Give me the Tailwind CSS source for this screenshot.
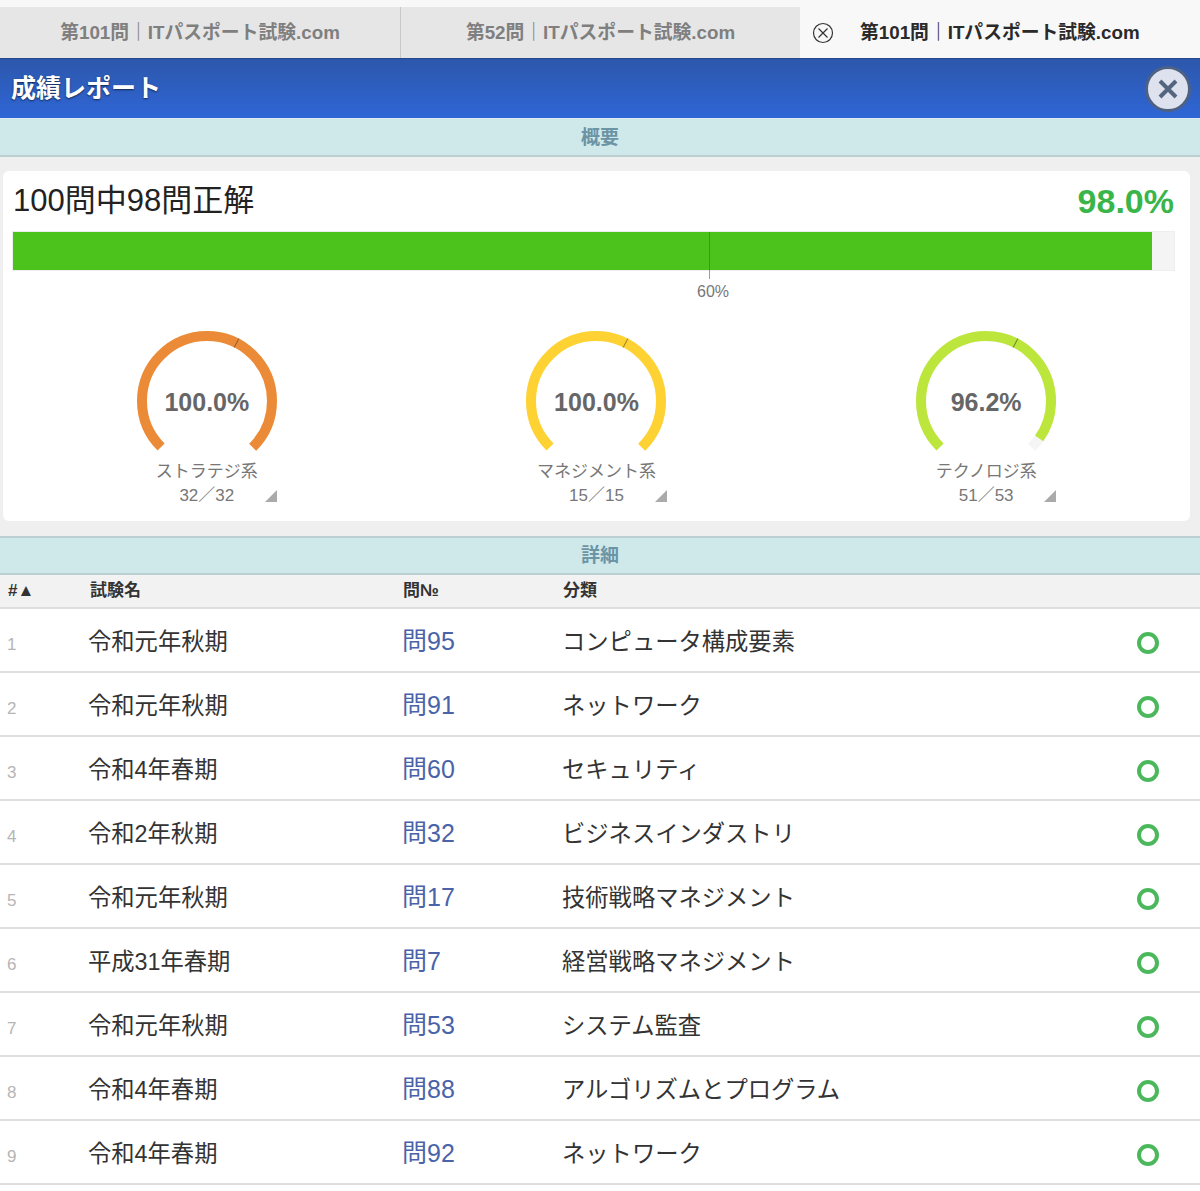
<!DOCTYPE html>
<html lang="ja">
<head>
	<meta charset="UTF-8">
	<title>成績レポート</title>
	<script src="https://cdn.jsdelivr.net/npm/@tailwindcss/browser@4"></script>
</head>
<body class="bg-white font-['Liberation_Sans','Noto_Sans_CJK_JP',sans-serif]">
<div class="w-[1200px] h-[1191px] overflow-hidden flex flex-col">
	<!-- Tabs -->
	<div class="bg-[#f8f8f8] pt-[7px] h-[58px] flex shrink-0">
		<div class="w-[400px] flex items-center justify-center pt-[2px] bg-[#e6e6e7] text-[18.8px] font-bold text-[#7f7f7f]">第101問｜ITパスポート試験.com</div>
		<div class="w-[400px] flex items-center justify-center pt-[2px] bg-[#e6e6e7] border-l border-[#c8c8c8] text-[18.8px] font-bold text-[#7f7f7f]">第52問｜ITパスポート試験.com</div>
		<div class="w-[400px] flex items-center pl-[12px] gap-[26px] text-[18.8px] font-bold text-[#2a2a2a]">
			<svg width="22" height="22" viewBox="0 0 22 22" fill="none" stroke="#333" stroke-width="1.2">
				<circle cx="11" cy="11" r="9.5"></circle>
				<path d="M6.5 6.5l9 9M15.5 6.5l-9 9"></path>
			</svg>
			<span class="pt-[2px]">第101問｜ITパスポート試験.com</span>
		</div>
	</div>

	<!-- Title bar -->
	<div class="h-[60px] shrink-0 flex items-center justify-between pl-[11px] pr-[9px] border-t border-[#24498f] bg-gradient-to-b from-[#2c57ac] to-[#2f66d6]">
		<h1 class="text-[25px] font-bold text-white [text-shadow:0_1px_2px_rgba(0,0,0,0.6)]">成績レポート</h1>
		<button class="w-[46px] h-[46px] rounded-full bg-[#dde2ee] border-[3px] border-[#4d6283] flex items-center justify-center">
			<svg width="24" height="24" viewBox="0 0 24 24" fill="none" stroke="#54657f" stroke-width="4">
				<path d="M4 4l16 16M20 4L4 20"></path>
			</svg>
		</button>
	</div>

	<div class="h-[39px] shrink-0 flex items-center justify-center pt-[3px] bg-[#cfe8ea] border-t border-[#dcecf0] border-b-2 border-b-[#bcd0d2] text-[19px] font-bold text-[#6b94a4]">概要</div>

	<!-- Summary -->
	<div class="h-[379px] shrink-0 bg-[#efefef] pt-[14px] px-[3px]">
		<div class="w-[1187px] h-[350px] bg-white rounded-[6px] pl-[9px] pt-[9px]">
			<div class="flex items-center justify-between w-[1162px] h-[42px]">
				<div class="text-[31px] text-[#222] pl-[1px]">100問中98問正解</div>
				<div class="text-[34px] font-bold text-[#39b54a]">98.0%</div>
			</div>
			<div class="mt-[9px] w-[1163px] h-[40px] bg-[#f4f4f4] border border-[#eeeeee] relative">
				<div class="h-full w-[1139px] bg-[#4cc31c]"></div>
				<div class="absolute left-[696px] top-0 w-px h-[47px] bg-[#2f7d18]/60"></div>
			</div>
			<div class="w-[1163px] h-[12px] relative">
				<span class="absolute left-[685px] top-[9px] text-[16px] text-[#777]">60%</span>
			</div>
			<div class="grid grid-cols-3 w-[1169px] mt-[48px]">
				<div class="flex flex-col items-center relative">
					<div class="relative w-[140px] h-[140px]">
						<svg width="140" height="140" viewBox="0 0 140 140" fill="none" stroke-width="10">
							<circle cx="70" cy="70" r="65" stroke="#ec8b37" stroke-dasharray="306.3 408.4" transform="rotate(135 70 70)"></circle>
							<path d="M101.8 7.6L97.2 16.5" stroke="#8a5a2a" stroke-width="1"></path>
						</svg>
						<div class="absolute inset-0 flex items-center justify-center pt-[4px] text-[25px] font-bold text-[#666]">100.0%</div>
					</div>
					<div class="text-[17px] text-[#777] mt-[-12px] leading-[26px]">ストラテジ系</div>
					<div class="text-[17px] text-[#777] leading-[22px]">32／32</div>
					<svg class="absolute left-[253px] top-[159px]" width="12" height="12" viewBox="0 0 12 12"><path d="M12 0V12H0z" fill="#aaaaaa"></path></svg>
				</div>
				<div class="flex flex-col items-center relative">
					<div class="relative w-[140px] h-[140px]">
						<svg width="140" height="140" viewBox="0 0 140 140" fill="none" stroke-width="10">
							<circle cx="70" cy="70" r="65" stroke="#fdd232" stroke-dasharray="306.3 408.4" transform="rotate(135 70 70)"></circle>
							<path d="M101.8 7.6L97.2 16.5" stroke="#8f7a2a" stroke-width="1"></path>
						</svg>
						<div class="absolute inset-0 flex items-center justify-center pt-[4px] text-[25px] font-bold text-[#666]">100.0%</div>
					</div>
					<div class="text-[17px] text-[#777] mt-[-12px] leading-[26px]">マネジメント系</div>
					<div class="text-[17px] text-[#777] leading-[22px]">15／15</div>
					<svg class="absolute left-[253px] top-[159px]" width="12" height="12" viewBox="0 0 12 12"><path d="M12 0V12H0z" fill="#aaaaaa"></path></svg>
				</div>
				<div class="flex flex-col items-center relative">
					<div class="relative w-[140px] h-[140px]">
						<svg width="140" height="140" viewBox="0 0 140 140" fill="none" stroke-width="10">
							<circle cx="70" cy="70" r="65" stroke="#f5f5f5" stroke-dasharray="306.3 408.4" transform="rotate(135 70 70)"></circle>
							<circle cx="70" cy="70" r="65" stroke="#bde63c" stroke-dasharray="294.7 408.4" transform="rotate(135 70 70)"></circle>
							<path d="M101.8 7.6L97.2 16.5" stroke="#5f7a2a" stroke-width="1"></path>
						</svg>
						<div class="absolute inset-0 flex items-center justify-center pt-[4px] text-[25px] font-bold text-[#666]">96.2%</div>
					</div>
					<div class="text-[17px] text-[#777] mt-[-12px] leading-[26px]">テクノロジ系</div>
					<div class="text-[17px] text-[#777] leading-[22px]">51／53</div>
					<svg class="absolute left-[253px] top-[159px]" width="12" height="12" viewBox="0 0 12 12"><path d="M12 0V12H0z" fill="#aaaaaa"></path></svg>
				</div>
			</div>
		</div>
	</div>

	<div class="h-[39px] shrink-0 flex items-center justify-center pt-[2px] bg-[#cfe8ea] border-t-2 border-t-[#bcd0d2] border-b-2 border-b-[#bcd0d2] text-[19px] font-bold text-[#6b94a4]">詳細</div>

	<!-- Detail table -->
	<div class="h-[34px] shrink-0 grid grid-cols-[88px_314px_160px_1fr] items-center bg-[#f2f2f2] border-b-2 border-[#dedede] text-[17px] font-bold text-[#333]">
		<div class="pl-[8px]">#▲</div>
		<div class="pl-[2px]">試験名</div>
		<div class="pl-[1px]">問№</div>
		<div class="pl-[1px]">分類</div>
	</div>

	<div class="h-[64px] shrink-0 pt-[4px] grid grid-cols-[88px_314px_160px_1fr_63px] items-center border-b-2 border-[#dedede] text-[23.3px] text-[#333]">
		<div class="pl-[7px] pt-[6px] text-[17px] text-[#b5b5b5]">1</div>
		<div>令和元年秋期</div>
		<div class="text-[25px] text-[#4a63a8]">問95</div>
		<div>コンピュータ構成要素</div>
		<svg class="mt-[2px]" width="22" height="22" viewBox="0 0 22 22" fill="none" stroke="#4cb85c" stroke-width="4"><circle cx="11" cy="11" r="9"></circle></svg>
	</div>
	<div class="h-[64px] shrink-0 pt-[4px] grid grid-cols-[88px_314px_160px_1fr_63px] items-center border-b-2 border-[#dedede] text-[23.3px] text-[#333]">
		<div class="pl-[7px] pt-[6px] text-[17px] text-[#b5b5b5]">2</div>
		<div>令和元年秋期</div>
		<div class="text-[25px] text-[#4a63a8]">問91</div>
		<div>ネットワーク</div>
		<svg class="mt-[2px]" width="22" height="22" viewBox="0 0 22 22" fill="none" stroke="#4cb85c" stroke-width="4"><circle cx="11" cy="11" r="9"></circle></svg>
	</div>
	<div class="h-[64px] shrink-0 pt-[4px] grid grid-cols-[88px_314px_160px_1fr_63px] items-center border-b-2 border-[#dedede] text-[23.3px] text-[#333]">
		<div class="pl-[7px] pt-[6px] text-[17px] text-[#b5b5b5]">3</div>
		<div>令和4年春期</div>
		<div class="text-[25px] text-[#4a63a8]">問60</div>
		<div>セキュリティ</div>
		<svg class="mt-[2px]" width="22" height="22" viewBox="0 0 22 22" fill="none" stroke="#4cb85c" stroke-width="4"><circle cx="11" cy="11" r="9"></circle></svg>
	</div>
	<div class="h-[64px] shrink-0 pt-[4px] grid grid-cols-[88px_314px_160px_1fr_63px] items-center border-b-2 border-[#dedede] text-[23.3px] text-[#333]">
		<div class="pl-[7px] pt-[6px] text-[17px] text-[#b5b5b5]">4</div>
		<div>令和2年秋期</div>
		<div class="text-[25px] text-[#4a63a8]">問32</div>
		<div>ビジネスインダストリ</div>
		<svg class="mt-[2px]" width="22" height="22" viewBox="0 0 22 22" fill="none" stroke="#4cb85c" stroke-width="4"><circle cx="11" cy="11" r="9"></circle></svg>
	</div>
	<div class="h-[64px] shrink-0 pt-[4px] grid grid-cols-[88px_314px_160px_1fr_63px] items-center border-b-2 border-[#dedede] text-[23.3px] text-[#333]">
		<div class="pl-[7px] pt-[6px] text-[17px] text-[#b5b5b5]">5</div>
		<div>令和元年秋期</div>
		<div class="text-[25px] text-[#4a63a8]">問17</div>
		<div>技術戦略マネジメント</div>
		<svg class="mt-[2px]" width="22" height="22" viewBox="0 0 22 22" fill="none" stroke="#4cb85c" stroke-width="4"><circle cx="11" cy="11" r="9"></circle></svg>
	</div>
	<div class="h-[64px] shrink-0 pt-[4px] grid grid-cols-[88px_314px_160px_1fr_63px] items-center border-b-2 border-[#dedede] text-[23.3px] text-[#333]">
		<div class="pl-[7px] pt-[6px] text-[17px] text-[#b5b5b5]">6</div>
		<div>平成31年春期</div>
		<div class="text-[25px] text-[#4a63a8]">問7</div>
		<div>経営戦略マネジメント</div>
		<svg class="mt-[2px]" width="22" height="22" viewBox="0 0 22 22" fill="none" stroke="#4cb85c" stroke-width="4"><circle cx="11" cy="11" r="9"></circle></svg>
	</div>
	<div class="h-[64px] shrink-0 pt-[4px] grid grid-cols-[88px_314px_160px_1fr_63px] items-center border-b-2 border-[#dedede] text-[23.3px] text-[#333]">
		<div class="pl-[7px] pt-[6px] text-[17px] text-[#b5b5b5]">7</div>
		<div>令和元年秋期</div>
		<div class="text-[25px] text-[#4a63a8]">問53</div>
		<div>システム監査</div>
		<svg class="mt-[2px]" width="22" height="22" viewBox="0 0 22 22" fill="none" stroke="#4cb85c" stroke-width="4"><circle cx="11" cy="11" r="9"></circle></svg>
	</div>
	<div class="h-[64px] shrink-0 pt-[4px] grid grid-cols-[88px_314px_160px_1fr_63px] items-center border-b-2 border-[#dedede] text-[23.3px] text-[#333]">
		<div class="pl-[7px] pt-[6px] text-[17px] text-[#b5b5b5]">8</div>
		<div>令和4年春期</div>
		<div class="text-[25px] text-[#4a63a8]">問88</div>
		<div>アルゴリズムとプログラム</div>
		<svg class="mt-[2px]" width="22" height="22" viewBox="0 0 22 22" fill="none" stroke="#4cb85c" stroke-width="4"><circle cx="11" cy="11" r="9"></circle></svg>
	</div>
	<div class="h-[64px] shrink-0 pt-[4px] grid grid-cols-[88px_314px_160px_1fr_63px] items-center border-b-2 border-[#dedede] text-[23.3px] text-[#333]">
		<div class="pl-[7px] pt-[6px] text-[17px] text-[#b5b5b5]">9</div>
		<div>令和4年春期</div>
		<div class="text-[25px] text-[#4a63a8]">問92</div>
		<div>ネットワーク</div>
		<svg class="mt-[2px]" width="22" height="22" viewBox="0 0 22 22" fill="none" stroke="#4cb85c" stroke-width="4"><circle cx="11" cy="11" r="9"></circle></svg>
	</div>
</div>
</body>
</html>
